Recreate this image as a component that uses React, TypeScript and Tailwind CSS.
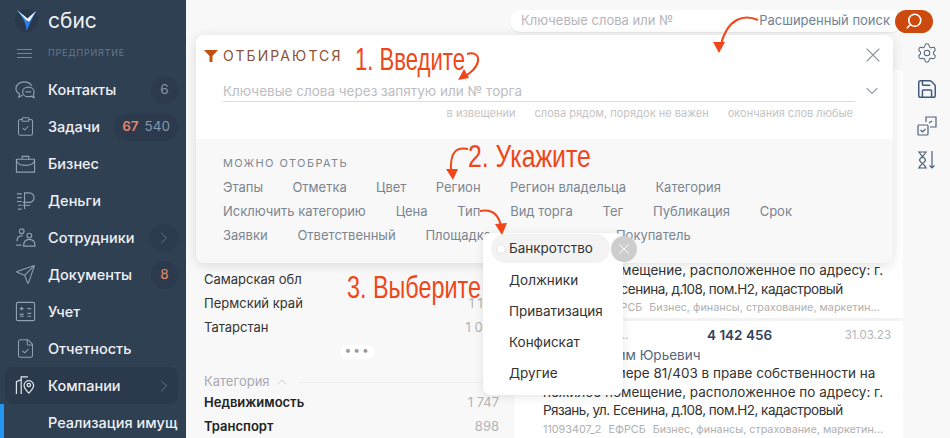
import { ChevronDown, ChevronRight, ChevronUp, ClipboardCheck, FileCheck, Save, Search, Send, Settings, X } from "lucide-react";
import type { ReactNode } from "react";

const iconClass = "w-[21px] h-[21px] text-[#8fa0b3]";

const ContactsIcon = () => (
    <svg viewBox="0 0 22 22" className={iconClass} fill="none" stroke="currentColor" strokeWidth="1.2">
        <path d="M5 16C2.500 14.500 1 12.500 1 10c0-4 4-7 8.500-7 3.500 0 6.500 1.500 8 4" />
        <path d="M5 16l-1 3 4-2" />
        <path d="M14 8.500c-3.500 0-6 2.200-6 5s2.500 5 6 5c1 0 2-.2 2.800-.5l3.200 1.500-.8-3c.5-.9.800-2 .800-3 0-2.800-2.500-5-6-5z" />
        <path d="M11 13.500h6" />
    </svg>
);

const BriefcaseIcon = () => (
    <svg viewBox="0 0 22 22" className={iconClass} fill="none" stroke="currentColor" strokeWidth="1.2">
        <path d="M1.500 6.500h19v13.500h-19zM7.500 6.500V3.500h7v3" />
        <path d="M1.500 6.500c0 5 4 6.500 9.500 6.500s9.500-1.500 9.500-6.500" />
    </svg>
);

const MoneyIcon = () => (
    <svg viewBox="0 0 22 22" className={iconClass} fill="none" stroke="currentColor" strokeWidth="1.2">
        <path d="M2 4h5M2 8h5M2 12h5M3 16h4M3 20h4" />
        <path d="M10 20V3h5a5 5 0 0 1 0 10H8M8 16h8" />
    </svg>
);

const StaffIcon = () => (
    <svg viewBox="0 0 22 22" className={iconClass} fill="none" stroke="currentColor" strokeWidth="1.2">
        <circle cx="7" cy="4.500" r="2.500" />
        <circle cx="15" cy="9" r="2.500" />
        <path d="M2 15c0-4 2-6 6-6M9 20c0-5 2-7 6-7s6 2 6 7z" />
        <path d="M1 19h6" />
    </svg>
);

const AccountIcon = () => (
    <svg viewBox="0 0 22 22" className={iconClass} fill="none" stroke="currentColor" strokeWidth="1.2">
        <rect x="1.500" y="1.500" width="19" height="19" rx="1.500" />
        <path d="M5 8h4M7 6v4M13 8h4M5 14h4M13 13h4M13 16h4M5 16h4" />
    </svg>
);

const CompanyIcon = () => (
    <svg viewBox="0 0 22 22" className="w-[21px] h-[21px] text-[#dfe5ec]" fill="none" stroke="currentColor" strokeWidth="1.3">
        <path d="M1.500 20V7l5-2v15M6.500 5V2h7" />
        <path d="M14.500 19c-3-3-5-5.500-5-8a5 5 0 0 1 10 0c0 2.500-2 5-5 8z" />
        <circle cx="14.500" cy="10.500" r="1.800" />
    </svg>
);

const Logo = () => (
    <svg viewBox="0 0 24 30" className="w-[23px] h-[29px]">
        <circle cx="12" cy="15" r="12" fill="#2a394a" />
        <path d="M2 4l11 9 9-8-6 12-4 9c0-6-2-12-10-22z" fill="#2f80ed" />
        <path d="M2 4l11 9 9-8-7 11-3-1z" fill="#f3f6fa" />
    </svg>
);

const FunnelIcon = () => (
    <svg viewBox="0 0 14 12" className="w-[14px] h-[12px]">
        <path d="M0 0h14L8.500 6v6h-3V6z" fill="#c4500f" />
    </svg>
);

const CopyCheckIcon = () => (
    <svg viewBox="0 0 20 20" className="w-[20px] h-[20px] mt-[2px] text-[#4d6378]" fill="none" stroke="currentColor" strokeWidth="1.2">
        <rect x="1" y="9" width="10" height="10" rx="1" />
        <path d="M9 6V1h10v10h-6M3.500 14l2 2 3-3M12 7l3-2" />
    </svg>
);

const SortIcon = () => (
    <svg viewBox="0 0 20 20" className="w-[20px] h-[20px] text-[#4d6378]" fill="none" stroke="currentColor" strokeWidth="1.2">
        <path d="M1 2h9M1 18h9M2.500 2c0 4 5 4 6 8-1 4-6 4-6 8M8.500 2c0 4-5 4-6 8 1 4 6 4 6 8" />
        <path d="M15 1v17M12.500 15.500L15 18l2.500-2.500" />
    </svg>
);

type NavItem = { label: string; icon: ReactNode; badge?: ReactNode; active?: boolean };

const pill = "h-7 min-w-[27px] px-2 rounded-full bg-[#2b3b4d] flex items-center justify-center gap-1.5 text-[13.5px] text-[#8596ad]";

const navItems: NavItem[] = [
    { label: "Контакты", icon: <ContactsIcon />, badge: <span className={pill}>6</span> },
    {
        label: "Задачи",
        icon: <ClipboardCheck className={iconClass} strokeWidth={1.2} />,
        badge: (
            <span className={pill}>
                <span className="text-[#e8806a] font-semibold">67</span>540
            </span>
        ),
    },
    { label: "Бизнес", icon: <BriefcaseIcon /> },
    { label: "Деньги", icon: <MoneyIcon /> },
    { label: "Сотрудники", icon: <StaffIcon />, badge: <span className={pill}><ChevronRight className="w-5 h-5 -mx-1 text-[#66778b]" strokeWidth={1.2} /></span> },
    { label: "Документы", icon: <Send className={iconClass} strokeWidth={1.2} />, badge: <span className={pill}><span className="text-[#ee8a60]">8</span></span> },
    { label: "Учет", icon: <AccountIcon /> },
    { label: "Отчетность", icon: <FileCheck className={iconClass} strokeWidth={1.2} /> },
    { label: "Компании", icon: <CompanyIcon />, badge: <ChevronRight className="w-5 h-5 mr-1 text-[#66778b]" strokeWidth={1.2} />, active: true },
];

const filterRows = [
    { gap: "gap-[29.300px]", items: ["Этапы", "Отметка", "Цвет", "Регион", "Регион владельца", "Категория"] },
    { gap: "gap-[29.800px]", items: ["Исключить категорию", "Цена", "Тип", "Вид торга", "Тег", "Публикация", "Срок"] },
    { gap: "gap-[29.800px]", items: ["Заявки", "Ответственный", "Площадка"] },
];

const hand = "absolute origin-left font-['Liberation_Sans',sans-serif] text-[32px] text-[#f0461a] whitespace-nowrap";
const smallLine = "mt-px text-[10.8px] text-[#b0b0b0] whitespace-nowrap overflow-hidden";

const Sidebar = () => (
    <aside className="w-[186px] shrink-0 h-full bg-[#2f4053] flex flex-col overflow-hidden text-[#eef1f5]">
        <div className="h-[41px] shrink-0 flex items-center pl-[15px] gap-[10px]">
            <Logo />
            <span className="text-[21px] leading-none">сбис</span>
        </div>
        <div className="h-[24px] shrink-0 flex items-center pl-[17px] gap-[16px]">
            <div className="w-[15px] flex flex-col gap-[3px]">
                <div className="h-px bg-[#75869a]" />
                <div className="h-px bg-[#75869a]" />
                <div className="h-px bg-[#75869a]" />
            </div>
            <span className="text-[9px] tracking-[0.8px] text-[#64768c]">ПРЕДПРИЯТИЕ</span>
        </div>
        <nav className="flex flex-col shrink-0 pt-[6px]">
            {navItems.map((item) => (
                <div
                    key={item.label}
                    className={`h-[37px] ml-[5px] mr-[8px] pl-[10px] flex items-center rounded-lg ${item.active ? "bg-[#2a394b]" : ""}`}
                >
                    <span className="w-[33px] shrink-0">{item.icon}</span>
                    <span className="text-[14.5px] font-medium flex-1">{item.label}</span>
                    {item.badge}
                </div>
            ))}
            <div className="h-[37px] flex items-center border-l-[4px] border-[#2196f3] pl-[44px] text-[14.5px] font-medium whitespace-nowrap overflow-hidden mr-[8px]">
                Реализация имущества
            </div>
        </nav>
    </aside>
);

const Facets = () => (
    <div className="w-[328px] shrink-0 pl-[18px] pr-[15px] pt-[235px] text-[13px] text-[#333]">
        <div className="h-[24px] flex items-center"><span>Самарская обл</span></div>
        <div className="h-[24px] flex items-center justify-between"><span>Пермский край</span><span className="text-[#b5b5b5]">1 136</span></div>
        <div className="h-[24px] flex items-center justify-between"><span>Татарстан</span><span className="text-[#b5b5b5]">1 042</span></div>
        <div className="h-[24px] flex justify-center items-center pl-[12px]">
            <span className="w-[35px] h-[14px] bg-white rounded-full text-center text-[#999] text-[12px] leading-[10px] tracking-[2px]">•••</span>
        </div>
        <div className="h-[27px] pt-[9px] flex items-center gap-1 text-[#a9a9b3]">
            Категория <ChevronUp className="w-4 h-4 text-[#cfcfcf]" strokeWidth={1.5} />
            <div className="flex-1 h-px bg-[#efefef] ml-1" />
        </div>
        <div className="h-[24px] flex items-center justify-between font-semibold text-[#222]"><span>Недвижимость</span><span className="font-normal text-[#b5b5b5]">1 747</span></div>
        <div className="h-[24px] flex items-center justify-between font-semibold text-[#222]"><span>Транспорт</span><span className="font-normal text-[#b5b5b5]">898</span></div>
    </div>
);

const Results = () => (
    <div className="w-[389px] shrink-0 mt-[37px] flex flex-col gap-[3px] bg-[#f3f3f3] text-[13.5px] leading-[18.500px] text-[#333]">
        <div className="bg-white h-[248px] pl-[29px] pr-[12px] pt-[191px]">
            <div className="whitespace-nowrap">нежилое помещение, расположенное по адресу: г.</div>
            <div className="whitespace-nowrap tracking-[-0.5px]">Рязань, ул. Есенина, д.108, пом.Н2, кадастровый</div>
            <div className={smallLine}>
                <span className="mr-[7px]">11093407_1</span><span className="mr-[7px]">ЕФРСБ</span>Бизнес, финансы, страхование, маркетин...
            </div>
        </div>
        <div className="bg-white flex-1 pl-[29px] pr-[12px] pt-[5px]">
            <div className="flex items-center h-[20px]">
                <span className="w-[164px] text-[11px] text-[#b0b0b0]">Публичное пр...</span>
                <span className="flex-1 text-[13.5px] font-semibold text-[#33415f]">4 142 456</span>
                <span className="text-[11.5px] text-[#b5b5b5]">31.03.23</span>
            </div>
            <div className="pl-[40px] text-[#55677c]">Максим Юрьевич</div>
            <div className="whitespace-nowrap">Доля в размере 81/403 в праве собственности на</div>
            <div className="whitespace-nowrap">нежилое помещение, расположенное по адресу: г.</div>
            <div className="whitespace-nowrap tracking-[-0.5px]">Рязань, ул. Есенина, д.108, пом.Н2, кадастровый</div>
            <div className={smallLine}>
                <span className="mr-[7px]">11093407_2</span><span className="mr-[7px]">ЕФРСБ</span>Бизнес, финансы, страхование, маркетин...
            </div>
        </div>
    </div>
);

const FilterPanel = () => (
    <div className="absolute left-[10px] top-[35px] w-[697px] h-[228px] rounded-lg bg-[#f8f8f8] shadow-[0_2px_12px_rgba(0,0,0,0.12)] overflow-hidden">
        <div className="relative bg-white h-[104px] pl-[27px] pr-[38px]">
            <div className="absolute left-[8px] top-[15px]"><FunnelIcon /></div>
            <div className="pt-[10px] h-[46px] text-[14px] tracking-[2.100px] text-[#8a5238]">ОТБИРАЮТСЯ</div>
            <X className="absolute right-[8px] top-[8px] w-[24px] h-[24px] text-[#8c96a1]" strokeWidth={1.1} />
            <ChevronDown className="absolute right-[11px] top-[46px] w-[20px] h-[20px] text-[#9aa4ae]" strokeWidth={1.3} />
            <div className="h-[21px] text-[13.5px] text-[#bdbdc4] border-b border-[#dcdcdc]">Ключевые слова через запятую или № торга</div>
            <div className="flex justify-end gap-[19px] pt-[3px] pr-[2px] text-[11px] text-[#c4c4c4]">
                <span>в извещении</span>
                <span>слова рядом, порядок не важен</span>
                <span>окончания слов любые</span>
            </div>
        </div>
        <div className="pl-[27px] pt-[16px]">
            <div className="text-[11px] tracking-[1.400px] text-[#7f8790] mb-[4.500px]">МОЖНО ОТОБРАТЬ</div>
            <div className="flex flex-col">
                {filterRows.map((row) => (
                    <div key={row.items[0]} className={`h-[24px] flex items-center ${row.gap} text-[13px] text-[#7a8591]`}>
                        {row.items.map((f) => (
                            <span key={f}>{f}</span>
                        ))}
                        {row.items[0] === "Заявки" && <span className="ml-[95px]">Покупатель</span>}
                    </div>
                ))}
            </div>
        </div>
    </div>
);

const TypeMenu = () => (
    <div className="absolute left-[297px] top-[233px] w-[140px] h-[162px] bg-white rounded-lg shadow-[0_2px_10px_rgba(0,0,0,0.1)] pt-[1px] text-[13.5px] text-[#333]">
        <div className="relative ml-[8px] mr-[13px] mb-[2px] h-[29px] rounded-full bg-[#f3f3f3] flex items-center pl-[5px] gap-[3px]">
            <span className="w-[10px] h-[10px] rounded-full bg-white border border-[#e4e4e4]" />
            Банкротство
            <span className="absolute -right-[27px] top-[2px] w-[26px] h-[26px] rounded-full bg-[#cdcdcd] flex items-center justify-center">
                <X className="w-[18px] h-[18px] text-white" strokeWidth={1.2} />
            </span>
        </div>
        {["Должники", "Приватизация", "Конфискат", "Другие"].map((m) => (
            <div key={m} className="h-[31px] pl-[26px] flex items-center">{m}</div>
        ))}
    </div>
);

const Notes = () => (
    <>
        <span className={`${hand} left-[169px] top-[35px] scale-x-[0.69]`}>1. Введите</span>
        <span className={`${hand} left-[282px] top-[132px] scale-x-[0.776]`}>2. Укажите</span>
        <span className={`${hand} left-[161px] top-[263px] scale-x-[0.73]`}>3. Выберите</span>
        <svg className="absolute left-0 top-0 pointer-events-none" width="764" height="438" fill="none" stroke="#f0461a" strokeWidth="2">
            <path d="M281 54c7-2 12 1 11 7-1 7-8 12-15 17" />
            <path d="M272 80l11-2-5-9z" fill="#f0461a" stroke="none" />
            <path d="M572 20c-14-6-30-2-37 24" />
            <path d="M527 42l6 11 6-11z" fill="#f0461a" stroke="none" />
            <path d="M282 149c-12-2-18 3-17 22" />
            <path d="M260 169l7 11 5-11z" fill="#f0461a" stroke="none" />
            <path d="M294 211c10-2 18 1 21 15" />
            <path d="M309 224l7 11 5-12z" fill="#f0461a" stroke="none" />
        </svg>
    </>
);

const App = () => (
    <div className="w-[950px] h-[438px] flex overflow-hidden bg-[#f8f8f8] font-['Inter',sans-serif]">
        <Sidebar />
        <main className="relative flex-1 flex flex-col min-w-0">
            <header className="h-[33px] shrink-0 flex items-center pl-[324px] pt-[9px]">
                <div className="w-[392px] h-[22px] bg-white rounded-full flex items-center justify-between pl-[11px] pr-[12px] text-[13px] shadow-[0_1px_2px_rgba(0,0,0,0.08)]">
                    <span className="text-[#b5b5bc]">Ключевые слова или №</span>
                    <span className="text-[#6d8294]">Расширенный поиск</span>
                </div>
                <div className="-ml-[7px] w-[38px] h-[23px] rounded-full bg-[#cc4a0e] flex items-center justify-center">
                    <Search className="w-[18px] h-[18px] text-white -scale-x-100" strokeWidth={2.2} />
                </div>
            </header>
            <div className="flex-1 flex min-h-0">
                <Facets />
                <Results />
                <div className="flex-1 flex flex-col items-center pt-[9px] gap-[14px]">
                    <Settings className="w-[22px] h-[22px] text-[#4d6378]" strokeWidth={1.1} />
                    <Save className="w-[22px] h-[22px] text-[#3f5a7c]" strokeWidth={1.6} />
                    <CopyCheckIcon />
                    <SortIcon />
                </div>
            </div>
            <FilterPanel />
            <TypeMenu />
            <Notes />
        </main>
    </div>
);

export default App;
